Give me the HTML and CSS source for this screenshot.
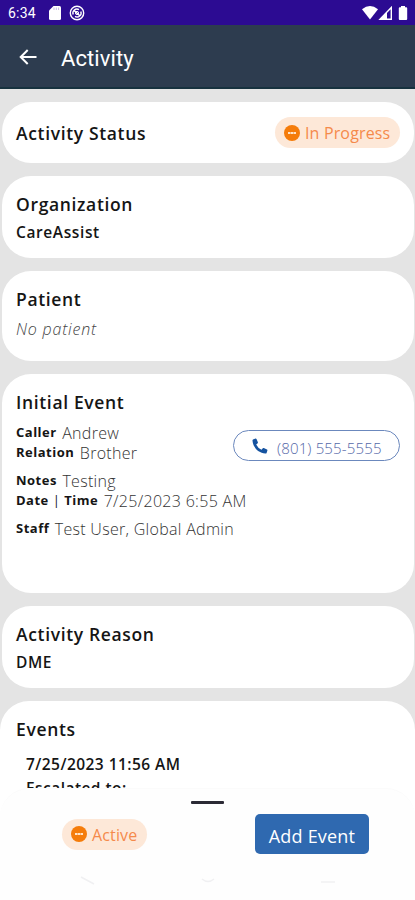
FILE: index.html
```html
<!DOCTYPE html>
<html lang="en">
<head>
  <meta charset="UTF-8" />
  <meta name="viewport" content="width=device-width, initial-scale=1" />
  <title>Activity</title>
  <link rel="stylesheet" href="styles.css">
</head>
<body>
  <div class="screen">
    <!-- STATUS BAR -->
    <div class="status-bar">
      <span class="clock">6:34</span>
      <svg class="sd-icon" width="12" height="14" viewBox="0 0 12 14"><path d="M4.5 0H10.5Q12 0 12 1.5V12.5Q12 14 10.5 14H1.5Q0 14 0 12.5V4.5Z" fill="#fff"/><path d="M5 1.500v2.500M7.300 1.500v2.500M9.600 1.500v2.500" stroke="#b3a6e0" stroke-width=".8"/></svg>
      <svg class="sync-icon" width="16" height="16" viewBox="0 0 16 16" fill="none" stroke="#fff">
        <circle cx="8" cy="8" r="6.7" stroke-width="1.4"/>
        <path d="M4.200 9.500A4 4 0 0 1 10 4.600M11.800 6.500A4 4 0 0 1 6 11.400M5.200 5.500l5.800 5.600" stroke-width="1.4"/>
        <circle cx="8" cy="8" r="1.6" stroke-width="1"/>
      </svg>
      <svg class="signal-icons" width="46" height="14" viewBox="0 0 46 14">
        <path d="M0 3.2Q8 -3 16 3.2L8 13.5Z" fill="#fff"/>
        <path d="M18 13.300L29.300 1.500V13.300Z" fill="none" stroke="#fff" stroke-width="1.4"/>
        <path d="M18 13.500L25 6V13.500Z" fill="#fff"/>
        <path d="M39 0h4v1.200h1.200q1 0 1 1V13q0 1-1 1h-6.400q-1 0-1-1V2.200q0-1 1-1H39Z" fill="#fff"/>
      </svg>
    </div>

    <!-- APP BAR -->
    <header class="app-bar">
      <svg width="18" height="16" viewBox="0 0 18 16" fill="none" stroke="#fff" stroke-width="2"><path d="M17.500 8H2M8.700 1L1.700 8l7 7"/></svg>
      <h1>Activity</h1>
    </header>

    <!-- CARDS -->
    <main class="cards">
      <section class="card card-status">
        <h2>Activity Status</h2>
        <span class="badge">
          <svg width="16" height="16" viewBox="0 0 16 16"><circle cx="8" cy="8" r="8" fill="#f57c0a"/><path d="M4 8h8" stroke="#ffe3c8" stroke-width="1.800" stroke-dasharray="2.400 .4"/></svg>
          <span class="badge-text">In Progress</span>
        </span>
      </section>

      <section class="card card-short">
        <h2>Organization</h2>
        <p class="value">CareAssist</p>
      </section>

      <section class="card card-patient">
        <h2>Patient</h2>
        <p class="empty">No patient</p>
      </section>

      <section class="card card-event">
        <h2>Initial Event</h2>
        <div class="event-body">
          <dl class="details">
            <div class="row"><dt>Caller</dt><dd>Andrew</dd></div>
            <div class="row"><dt>Relation</dt><dd>Brother</dd></div>
            <div class="row gap-top"><dt>Notes</dt><dd>Testing</dd></div>
            <div class="row"><dt>Date <span class="divider">|</span> Time</dt><dd>7/25/2023 6:55 AM</dd></div>
            <div class="row gap-top"><dt>Staff</dt><dd>Test User, Global Admin</dd></div>
          </dl>
          <a class="phone" href="tel:8015555555">
            <svg width="16" height="16" viewBox="0 0 16 16"><path d="M3.600 .6L1 1.400Q.4 1.700 .5 2.700C1.100 9.500 6.500 14.900 13.300 15.500Q14.300 15.600 14.600 15L15.400 12.400Q15.500 11.800 15 11.500L11.800 10.100Q11.200 9.900 10.800 10.300L9.500 11.800Q6 10.300 4.200 6.500L5.700 5.200Q6.100 4.800 5.900 4.200L4.500 1Q4.200 .5 3.600 .6Z" fill="#1553a0"/></svg>
            <span>(801) 555-5555</span>
          </a>
        </div>
      </section>

      <section class="card card-short">
        <h2>Activity Reason</h2>
        <p class="value">DME</p>
      </section>

      <section class="card card-events">
        <h2>Events</h2>
        <p class="event-line">7/25/2023 11:56 AM</p>
        <p class="event-line">Escalated to:</p>
      </section>
    </main>

    <!-- BOTTOM SHEET -->
    <footer class="sheet">
      <div class="handle"></div>
      <div class="actions">
        <span class="badge badge-active">
          <svg width="16" height="16" viewBox="0 0 16 16"><circle cx="8" cy="8" r="8" fill="#f57c0a"/><path d="M4 8h8" stroke="#ffe3c8" stroke-width="1.800" stroke-dasharray="2.400 .4"/></svg>
          <span class="badge-text">Active</span>
        </span>
        <button class="add-event">Add Event</button>
      </div>
      <div class="nav-hints">
        <svg width="16" height="10" viewBox="0 0 16 10"><path d="M1 1l13 7" stroke="#f0f0f2" stroke-width="1.500"/></svg>
        <svg width="14" height="10" viewBox="0 0 14 10"><path d="M1 3q6 5 12 0" fill="none" stroke="#f0f0f2" stroke-width="1.500"/></svg>
        <svg width="16" height="10" viewBox="0 0 16 10"><path d="M1 6h14" stroke="#f0f0f2" stroke-width="1.500"/></svg>
      </div>
    </footer>
  </div>
</body>
</html>
```

FILE: styles.css
```css
* {
  box-sizing: border-box;
}

body {
  margin: 0;
  background: #fff;
  color: #151515;
  font-family: "Open Sans", sans-serif;
}

h1, h2, p, dl, dd {
  margin: 0;
}

svg {
  display: block;
  flex-shrink: 0;
}

.screen {
  width: 415px;
  height: 900px;
  display: flex;
  flex-direction: column;
  overflow: hidden;
}

.status-bar {
  height: 25px;
  flex-shrink: 0;
  display: flex;
  align-items: center;
  padding: 1px 7px 0 8px;
  background: #2c0b92;
  color: #fff;
}

.clock {
  width: 41px;
  font: 400 14px Roboto, sans-serif;
  letter-spacing: 0.2px;
}

.sync-icon {
  margin-left: 8px;
}

.signal-icons {
  margin-left: auto;
}

.app-bar {
  height: 64px;
  flex-shrink: 0;
  display: flex;
  align-items: center;
  gap: 24px;
  padding: 1px 0 0 19px;
  background: #2d3c4f;
  border-bottom: 2px solid #17323f;
  color: #fff;
}

.app-bar h1 {
  font: 400 22px Roboto, sans-serif;
  letter-spacing: 0.1px;
  padding-top: 3px;
}

.cards {
  flex: 1;
  min-height: 0;
  overflow: hidden;
  display: flex;
  flex-direction: column;
  gap: 13px;
  padding: 13px 1px 0 2px;
  background: #e4e4e4;
}

.card {
  flex-shrink: 0;
  background: #fff;
  border-radius: 29px;
  padding: 16px 14px 0;
}

.card h2 {
  font-size: 17.5px;
  line-height: 24px;
  font-weight: 600;
  letter-spacing: 0.65px;
}

.card-status {
  height: 61px;
  display: flex;
  align-items: center;
  justify-content: space-between;
  padding-top: 0;
}

.card-short {
  height: 82px;
}

.card-patient {
  height: 90px;
}

.card-event {
  height: 219px;
}

.card-events {
  height: 140px;
  margin: 0 -1px 0 -2px;
  padding: 16px 15px 0 16px;
}

.badge {
  height: 31px;
  width: 125px;
  display: flex;
  align-items: center;
  gap: 5px;
  padding-left: 9px;
  border-radius: 16px;
  background: #fde8d8;
  color: #f58a4b;
  font-size: 16px;
  letter-spacing: 0.15px;
}

.badge-text {
  padding-top: 1px;
}

.badge-active {
  width: 85px;
}

.value {
  font-size: 15.5px;
  line-height: 32px;
  font-weight: 600;
  letter-spacing: 0.6px;
}

.empty {
  font-size: 16px;
  line-height: 36px;
  font-style: italic;
  font-weight: 300;
  letter-spacing: 0.8px;
  color: #444;
}

.event-body {
  display: flex;
  justify-content: space-between;
  align-items: flex-start;
}

.details {
  width: 0;
  padding-top: 9px;
}

.row {
  display: flex;
  height: 20px;
  gap: 5.5px;
  line-height: 20px;
  white-space: nowrap;
}

.gap-top {
  margin-top: 8px;
}

.row dt {
  font-size: 13px;
  font-weight: 700;
  line-height: 18px;
  letter-spacing: 0.5px;
}

.divider {
  font-weight: 400;
}

.row dd {
  font-size: 16px;
  font-weight: 300;
  letter-spacing: 0.3px;
  color: #333;
}

.phone {
  width: 167px;
  height: 31px;
  margin-top: 16px;
  display: flex;
  flex-shrink: 0;
  align-items: center;
  gap: 9px;
  padding-left: 18px;
  border: 1px solid #6b88bd;
  border-radius: 16px;
  color: #5468a8;
  font-size: 15px;
  font-weight: 300;
  letter-spacing: 0.15px;
  text-decoration: none;
  white-space: nowrap;
}

.phone span {
  padding-top: 4px;
}

.event-line {
  padding-left: 10px;
  font-size: 15.5px;
  font-weight: 600;
  line-height: 24px;
  letter-spacing: 0.45px;
}

.card-events h2 {
  margin-bottom: 11px;
}

.sheet {
  height: 112px;
  flex-shrink: 0;
  background: #fefefe;
  border-top: 1px solid #fbfbfb;
  border-radius: 29px 29px 0 0;
  padding-top: 12px;
}

.handle {
  width: 33px;
  height: 3px;
  margin: 0 auto;
  background: #2b2a35;
  border-radius: 1px;
}

.actions {
  display: flex;
  align-items: center;
  justify-content: space-between;
  padding: 10px 46px 0 62px;
}

.add-event {
  width: 114px;
  height: 40px;
  padding: 4px 0 0;
  border: 0;
  border-radius: 5px;
  background: #2f69b0;
  color: #fff;
  font: 400 18px "Open Sans", sans-serif;
  letter-spacing: 0.2px;
}

.nav-hints {
  display: flex;
  justify-content: space-between;
  padding: 22px 79px 0 80px;
}
```
